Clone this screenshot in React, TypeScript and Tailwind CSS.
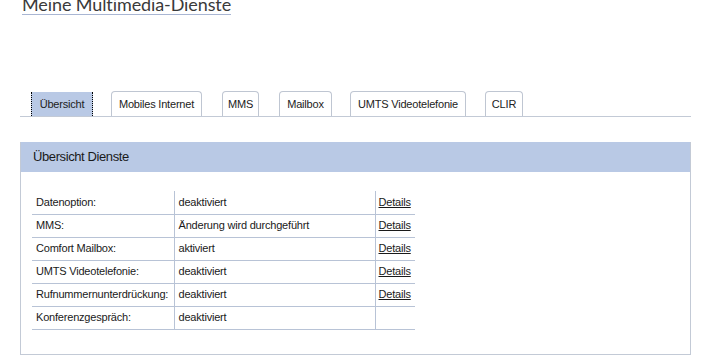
import React from "react";

const tabs = [
  { label: "Übersicht", active: true, cls: "w-[62px] ml-[11px]" },
  { label: "Mobiles Internet", cls: "w-[91px] ml-[18px]" },
  { label: "MMS", cls: "w-[37px] ml-[20px]" },
  { label: "Mailbox", cls: "w-[53px] ml-[20px]" },
  { label: "UMTS Videotelefonie", cls: "w-[116px] ml-[18px]" },
  { label: "CLIR", cls: "w-[38px] ml-[19px]" },
];

const rows = [
  ["Datenoption:", "deaktiviert", true],
  ["MMS:", "Änderung wird durchgeführt", true],
  ["Comfort Mailbox:", "aktiviert", true],
  ["UMTS Videotelefonie:", "deaktiviert", true],
  ["Rufnummernunterdrückung:", "deaktiviert", true],
  ["Konferenzgespräch:", "deaktiviert", false],
] as const;

export default function App() {
  return (
    <div className="w-[721px] h-[361px] overflow-hidden bg-white" style={{ fontFamily: '"Liberation Sans", Arial, sans-serif' }}>
      <div className="pl-[22px] mt-[-6px]">
        <span
          className="inline-block text-[18px] leading-[18px] tracking-[-0.1px] text-[#3a3a3a] border-b border-[#a9b6d3] pb-[1px]"
          style={{ fontFamily: 'Lato, "Open Sans", sans-serif' }}
        >
          Meine Multimedia-Dienste
        </span>
      </div>

      <div className="mt-[74px] ml-[20px] w-[671px] border-b border-[#c3cad6] flex items-end h-[25px]">
        {tabs.map((t) =>
          t.active ? (
            <div
              key={t.label}
              className={`${t.cls} h-[24px] bg-[#b9c9e5] border-x border-dotted border-black flex items-center justify-center text-[11px] tracking-[-0.2px] text-[#222]`}
            >
              {t.label}
            </div>
          ) : (
            <div
              key={t.label}
              className={`${t.cls} h-[25px] bg-white border border-b-0 border-[#bfc6d2] rounded-t-[4px] flex items-center justify-center text-[11px] tracking-[-0.2px] text-[#222]`}
            >
              {t.label}
            </div>
          )
        )}
      </div>

      <div className="mt-[25px] ml-[20px] w-[671px] h-[213px] border border-t-0 border-[#c3cad6]">
        <div className="h-[30px] bg-[#b9c9e5] flex items-center pl-[12px] text-[13px] text-[#1a1a1a] tracking-[-0.4px]">
          Übersicht Dienste
        </div>
        <div className="mt-[19px] ml-[11px]">
          <table className="border-collapse table-fixed w-[383px] text-[11px] tracking-[-0.2px] text-[#1a1a1a]">
            <colgroup>
              <col className="w-[142px]" />
              <col className="w-[201px]" />
              <col className="w-[40px]" />
            </colgroup>
            <tbody>
              {rows.map(([a, b, d], i) => (
                <tr key={i} className="h-[23px] border-b border-[#b8c3d6]">
                  <td className="pl-[4px] p-0 align-middle whitespace-nowrap">{a}</td>
                  <td className="pl-[4px] p-0 border-l border-[#b8c3d6] align-middle whitespace-nowrap">{b}</td>
                  <td className="pl-[3px] p-0 border-l border-[#b8c3d6] align-middle">
                    {d ? <span className="underline">Details</span> : null}
                  </td>
                </tr>
              ))}
            </tbody>
          </table>
        </div>
      </div>
    </div>
  );
}
